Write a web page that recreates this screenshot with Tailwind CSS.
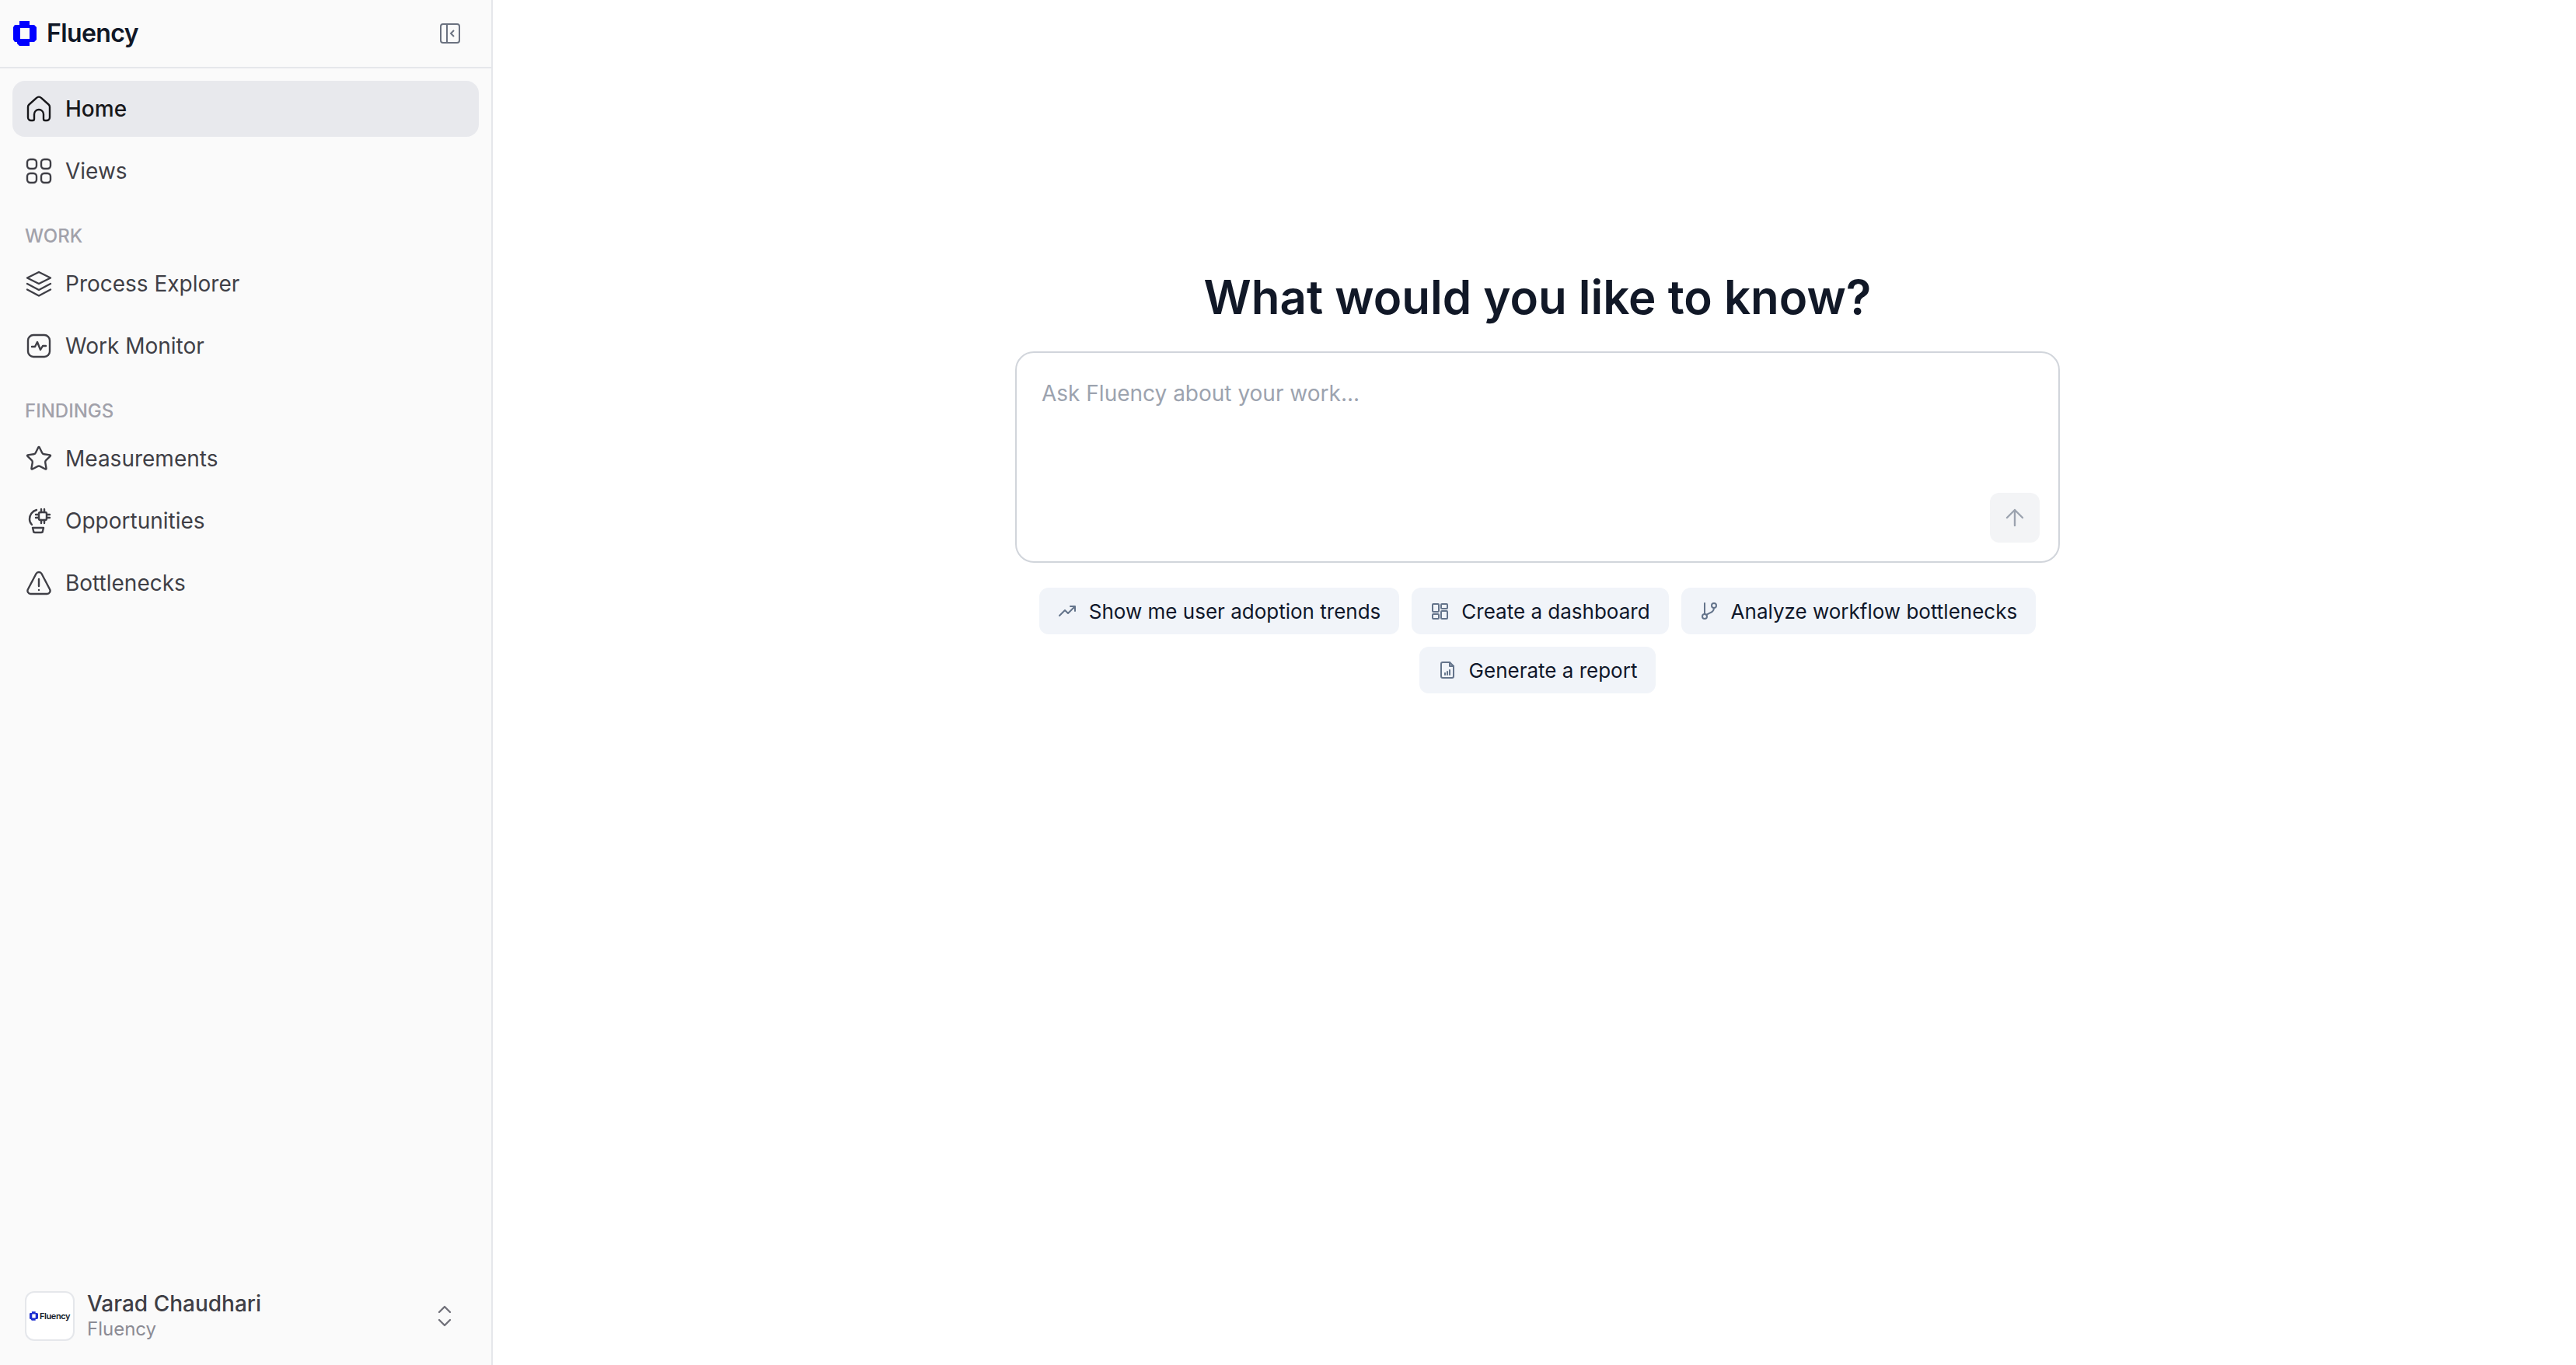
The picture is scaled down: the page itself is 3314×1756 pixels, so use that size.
<!DOCTYPE html>
<html lang="en">
<head>
    <meta charset="UTF-8">
    <title>Fluency</title>
    <script src="https://cdn.jsdelivr.net/npm/@tailwindcss/browser@4"></script>
</head>
<body class="bg-white font-['Inter',sans-serif]">
    <div class="flex h-[1756px] w-full overflow-hidden">
        <!-- Sidebar -->
        <aside class="flex w-[634px] shrink-0 flex-col border-r-2 border-[#e5e7eb] bg-[#fafafa]">
            <div class="flex h-[88px] shrink-0 items-center justify-between border-b-2 border-[#e5e7eb] pl-[17px] pr-[39px]">
                <div class="flex items-center gap-[13px]">
                    <svg class="h-[32px] w-[30px]" viewBox="0 0 30 32"><path fill="#0000ff" fill-rule="evenodd" d="M8 0h13v5h6l3 3v16l-3 3h-6v5H8l-3-3v-2H2l-2-3V8l2-3h6zM9 9v14h12V9z"/></svg>
                    <span class="text-[32px] font-semibold tracking-[-0.6px] text-[#111827]">Fluency</span>
                </div>
                <svg class="h-[28px] w-[28px]" viewBox="0 0 28 28" fill="none" stroke="#6b7280" stroke-width="2"><rect x="2" y="2" width="24" height="24" rx="3"/><path d="M10 2v24M19 10l-4 4 4 4"/></svg>
            </div>

            <nav class="flex flex-col px-[16px] pt-[16px]">
                <a class="flex h-[72px] items-center gap-[16px] rounded-[16px] bg-[#e8e9ed] pl-[16px] text-[28px] font-medium text-[#18181b]">
                    <svg class="h-[36px] w-[36px]" viewBox="0 0 36 36" fill="none" stroke="#18181b" stroke-width="2.4"><path d="M4 15.5a4 4 0 0 1 1.4-3l9.6-8.5a4 4 0 0 1 6 0l9.6 8.5a4 4 0 0 1 1.4 3V29a4 4 0 0 1-4 4h-2a2 2 0 0 1-2-2v-6a6 6 0 0 0-12 0v6a2 2 0 0 1-2 2H8a4 4 0 0 1-4-4z"/></svg>
                    Home
                </a>
                <a class="mt-[8px] flex h-[72px] items-center gap-[16px] pl-[16px] text-[28px] text-[#3f3f46]">
                    <svg class="h-[36px] w-[36px]" viewBox="0 0 36 36" fill="none" stroke="#3f3f46" stroke-width="2.4"><rect x="3" y="3" width="12" height="12" rx="4"/><rect x="21" y="3" width="12" height="12" rx="4"/><rect x="3" y="21" width="12" height="12" rx="4"/><rect x="21" y="21" width="12" height="12" rx="4"/></svg>
                    Views
                </a>

                <div class="mt-[32px] mb-[9px] flex h-[32px] items-center pl-[16px] text-[24px] font-medium text-[#a1a1aa]">WORK</div>
                <a class="flex h-[72px] items-center gap-[16px] pl-[16px] text-[28px] text-[#3f3f46]">
                    <svg class="h-[36px] w-[36px]" viewBox="0 0 36 36" fill="none" stroke="#3f3f46" stroke-width="2.4" stroke-linejoin="round" stroke-linecap="round"><path d="M18 3l15 7.5L18 18 3 10.500z"/><path d="M3 18l15 8 15-8"/><path d="M3 25.500l15 8 15-8"/></svg>
                    Process Explorer
                </a>
                <a class="mt-[8px] flex h-[72px] items-center gap-[16px] pl-[16px] text-[28px] text-[#3f3f46]">
                    <svg class="h-[36px] w-[36px]" viewBox="0 0 36 36" fill="none" stroke="#3f3f46" stroke-width="2.4" stroke-linejoin="round" stroke-linecap="round"><rect x="4" y="4" width="28" height="28" rx="7"/><path d="M9 19h4l3-6 4 10 3-5h4"/></svg>
                    Work Monitor
                </a>

                <div class="mt-[32px] mb-[9px] flex h-[32px] items-center pl-[16px] text-[24px] font-medium text-[#a1a1aa]">FINDINGS</div>
                <a class="flex h-[72px] items-center gap-[16px] pl-[16px] text-[28px] text-[#3f3f46]">
                    <svg class="h-[36px] w-[36px]" viewBox="0 0 24 24" fill="none" stroke="#3f3f46" stroke-width="1.6" stroke-linejoin="round"><path d="M11.525 2.295a.53.53 0 0 1 .95 0l2.31 4.679a2.123 2.123 0 0 0 1.595 1.16l5.166.756a.53.53 0 0 1 .294.904l-3.736 3.638a2.123 2.123 0 0 0-.611 1.878l.882 5.14a.53.53 0 0 1-.771.56l-4.618-2.428a2.122 2.122 0 0 0-1.973 0L6.396 21.01a.53.53 0 0 1-.77-.56l.881-5.139a2.122 2.122 0 0 0-.611-1.879L2.16 9.795a.53.53 0 0 1 .294-.906l5.165-.755a2.122 2.122 0 0 0 1.597-1.16z"/></svg>
                    Measurements
                </a>
                <a class="mt-[8px] flex h-[72px] items-center gap-[16px] pl-[16px] text-[28px] text-[#3f3f46]">
                    <svg class="h-[36px] w-[36px]" viewBox="0 0 36 36" fill="none" stroke="#3f3f46" stroke-width="2.4" stroke-linecap="round" stroke-linejoin="round"><path d="M15 4a12 12 0 0 0-9 12c0 3 1 5 3 7" stroke-dasharray="26 0"/><rect x="18" y="7" width="10" height="10" rx="2"/><path d="M21 3v4M25 3v4M21 17v4M25 17v4M14 10h4M14 14h4M28 10h4M28 14h4"/><path d="M10 27h14l-1 4a2 2 0 0 1-2 2h-8a2 2 0 0 1-2-2z"/></svg>
                    Opportunities
                </a>
                <a class="mt-[8px] flex h-[72px] items-center gap-[16px] pl-[16px] text-[28px] text-[#3f3f46]">
                    <svg class="h-[36px] w-[36px]" viewBox="0 0 36 36" fill="none" stroke="#3f3f46" stroke-width="2.4" stroke-linecap="round" stroke-linejoin="round"><path d="M14.500 6a4 4 0 0 1 7 0l10.500 20a4 4 0 0 1-3.500 6h-21a4 4 0 0 1-3.500-6z"/><path d="M18 13v9M18 27v.1"/></svg>
                    Bottlenecks
                </a>
            </nav>

            <div class="mt-auto flex h-[126px] items-center gap-[16px] pl-[32px] pr-[48px]">
                <div class="flex h-[64px] w-[64px] items-center justify-center gap-[2px] rounded-[12px] border-2 border-[#e5e7eb] bg-white">
                    <svg class="h-[12px] w-[11px]" viewBox="0 0 30 32"><path fill="#1e2fd0" fill-rule="evenodd" d="M8 0h13v5h6l3 3v16l-3 3h-6v5H8l-3-3v-2H2l-2-3V8l2-3h6zM9 9v14h12V9z"/></svg>
                    <span class="text-[11px] font-semibold tracking-[-0.4px] text-[#111827]">Fluency</span>
                </div>
                <div class="flex flex-col">
                    <span class="text-[28px] leading-[34px] font-medium text-[#3f3f46]">Varad Chaudhari</span>
                    <span class="text-[24px] leading-[32px] text-[#8b8b94]">Fluency</span>
                </div>
                <svg class="ml-auto h-[32px] w-[24px]" viewBox="0 0 24 32" fill="none" stroke="#71717a" stroke-width="2.400" stroke-linecap="round" stroke-linejoin="round"><path d="M5 11l7-7 7 7M5 21l7 7 7-7"/></svg>
            </div>
        </aside>

        <!-- Main -->
        <main class="flex flex-1 flex-col items-center pl-[8px] pt-[346px]">
            <h1 class="mb-[34px] text-[60px] leading-[72px] font-semibold text-[#111827]">What would you like to know?</h1>
            <div class="flex h-[272px] w-[1344px] flex-col rounded-[24px] border-2 border-[#d1d5db] bg-white pt-[32px] pr-[24px] pb-[24px] pl-[32px]">
                <div class="text-[28px] leading-[40px] text-[#9ca3af]">Ask Fluency about your work...</div>
                <button class="mt-auto flex h-[64px] w-[64px] items-center justify-center self-end rounded-[12px] bg-[#f3f4f6]">
                    <svg class="h-[28px] w-[28px]" viewBox="0 0 28 28" fill="none" stroke="#9ca3af" stroke-width="2.400" stroke-linecap="round" stroke-linejoin="round"><path d="M14 24V4M4 14L14 4l10 10"/></svg>
                </button>
            </div>
            <div class="mt-[32px] flex w-[1344px] flex-wrap justify-center gap-[16px]">
                <button class="flex h-[60px] items-center gap-[16px] rounded-[12px] bg-[#f1f4f9] px-[24px] text-[26px] text-[#0f172a]">
                    <svg class="h-[24px] w-[24px]" viewBox="0 0 24 24" fill="none" stroke="#64748b" stroke-width="2" stroke-linecap="round" stroke-linejoin="round"><path d="M2 18l7-7 4 4 9-9M16 6h6v6"/></svg>
                    Show me user adoption trends
                </button>
                <button class="flex h-[60px] items-center gap-[16px] rounded-[12px] bg-[#f1f4f9] px-[24px] text-[26px] text-[#0f172a]">
                    <svg class="h-[24px] w-[24px]" viewBox="0 0 24 24" fill="none" stroke="#64748b" stroke-width="2" stroke-linejoin="round"><rect x="3" y="3" width="8" height="10" rx="1"/><rect x="14" y="3" width="8" height="6" rx="1"/><rect x="3" y="16" width="8" height="6" rx="1"/><rect x="14" y="12" width="8" height="10" rx="1"/></svg>
                    Create a dashboard
                </button>
                <button class="flex h-[60px] items-center gap-[16px] rounded-[12px] bg-[#f1f4f9] px-[24px] text-[26px] text-[#0f172a]">
                    <svg class="h-[24px] w-[24px]" viewBox="0 0 24 24" fill="none" stroke="#64748b" stroke-width="2" stroke-linecap="round" stroke-linejoin="round"><path d="M6 2v14"/><circle cx="6" cy="19" r="3"/><circle cx="18" cy="5" r="3"/><path d="M18 8c0 6-6 6-10 9"/></svg>
                    Analyze workflow bottlenecks
                </button>
                <button class="flex h-[60px] items-center gap-[16px] rounded-[12px] bg-[#f1f4f9] px-[24px] text-[26px] text-[#0f172a]">
                    <svg class="h-[24px] w-[24px]" viewBox="0 0 24 24" fill="none" stroke="#64748b" stroke-width="2" stroke-linecap="round" stroke-linejoin="round"><path d="M15 2H6a2 2 0 0 0-2 2v16a2 2 0 0 0 2 2h12a2 2 0 0 0 2-2V7z"/><path d="M15 2v5h5M9 18v-2M12 18v-4M15 18v-6"/></svg>
                    Generate a report
                </button>
            </div>
        </main>
    </div>
</body>
</html>
